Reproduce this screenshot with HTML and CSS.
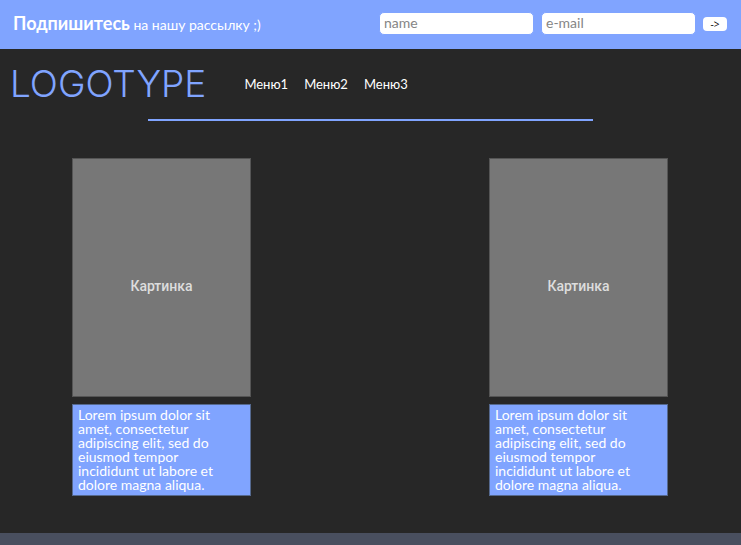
FILE: index.html
```html
<!DOCTYPE html>
<html lang="ru">
<head>
<meta charset="utf-8">
<meta name="viewport" content="width=device-width, initial-scale=1">
<title>Logotype</title>
<link rel="stylesheet" href="styles.css">
</head>
<body>
<form class="subscribe">
  <p class="subscribe-text"><strong>Подпишитесь</strong> на нашу рассылку ;)</p>
  <div class="subscribe-fields">
    <input class="field" type="text" placeholder="name" aria-label="name">
    <input class="field" type="email" placeholder="e-mail" aria-label="e-mail">
    <button class="send" type="submit">-&gt;</button>
  </div>
</form>
<header class="header">
  <a class="logo" href="#">LOGOTYPE</a>
  <nav class="menu">
    <a href="#">Меню1</a>
    <a href="#">Меню2</a>
    <a href="#">Меню3</a>
  </nav>
</header>
<hr class="divider">
<main class="cards">
  <article class="card">
    <div class="picture">Картинка</div>
    <p class="caption">Lorem ipsum dolor sit amet, consectetur adipiscing elit, sed do eiusmod tempor incididunt ut labore et dolore magna aliqua.</p>
  </article>
  <article class="card">
    <div class="picture">Картинка</div>
    <p class="caption">Lorem ipsum dolor sit amet, consectetur adipiscing elit, sed do eiusmod tempor incididunt ut labore et dolore magna aliqua.</p>
  </article>
</main>
<footer class="footer"></footer>
</body>
</html>
```
FILE: styles.css
```css
* {
  box-sizing: border-box;
}

body {
  display: flex;
  flex-direction: column;
  min-height: 100vh;
  margin: 0;
  background: #272727;
  color: #fff;
  font-family: Lato, "Open Sans", sans-serif;
  font-size: 14px;
  line-height: 14px;
}

p {
  margin: 0;
}

a {
  color: inherit;
  text-decoration: none;
}

.subscribe {
  display: flex;
  align-items: center;
  justify-content: space-between;
  padding: 12px 14px 14px 13px;
  background: #80a4ff;
}

.subscribe-text {
  line-height: 20px;
}

.subscribe-text strong {
  font-size: 18px;
}

.subscribe-fields {
  display: flex;
  align-items: center;
  gap: 7px;
}

.field {
  width: 155px;
  height: 23px;
  padding: 0 4px 2px;
  border: 1px solid #80a4ff;
  border-radius: 5px;
  background: #fff;
  font: inherit;
}

.field::placeholder {
  color: #858585;
}

.send {
  width: 24px;
  height: 14px;
  padding: 0;
  border: 0;
  border-radius: 4px;
  background: #fff;
  color: #000;
  font-family: "Open Sans", sans-serif;
  font-size: 10px;
  line-height: 14px;
}

.header {
  display: flex;
  align-items: center;
  gap: 38px;
  padding: 14px 10px;
}

.logo {
  color: #80a4ff;
  font-family: Inter, sans-serif;
  font-size: 37px;
  font-weight: 300;
  line-height: 42px;
}

.menu {
  display: flex;
  gap: 16px;
  font-size: 13px;
}

.divider {
  width: 60%;
  height: 2px;
  margin: 0 auto;
  border: 0;
  background: #80a4ff;
}

.cards {
  display: flex;
  flex-wrap: wrap;
  justify-content: space-between;
  padding: 37px 73px 37px 72px;
}

.card {
  display: grid;
  gap: 7px;
  width: 179px;
}

.picture {
  display: grid;
  place-items: center;
  height: 239px;
  padding-top: 16px;
  border: 1px solid #555;
  background: #777;
  color: #ddd;
  font-family: Roboto, sans-serif;
  font-weight: 500;
}

.caption {
  padding: 3px 32px 3px 5px;
  border: 1px solid #55698f;
  background: #80a4ff;
}

.footer {
  flex: 1;
  min-height: 12px;
  background: #494f5f;
}
```
